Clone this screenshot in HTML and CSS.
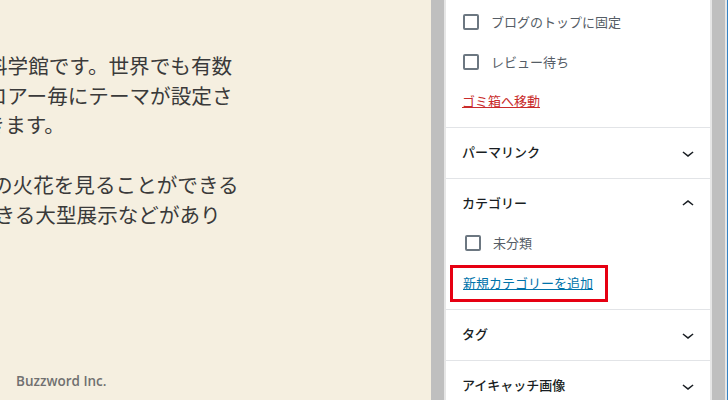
FILE: index.html
```html
<!DOCTYPE html>
<html lang="ja">

<head>
    <meta charset="UTF-8">
    <meta name="viewport" content="width=device-width, initial-scale=1.0">
    <title>投稿の編集</title>
    <link rel="stylesheet" href="styles.css">
</head>

<body>
    <div class="editor">
        <!-- 本文エリア -->
        <main class="content">
            <p class="para para-first">
                <span class="line shift-13">科学館です。世界でも有数</span>
                <span class="line shift-34">フロアー毎にテーマが設定さ</span>
                <span class="line shift-36">できます。</span>
            </p>
            <p class="para para-second">
                <span class="line shift-8">の火花を見ることができる</span>
                <span class="line shift-26">できる大型展示などがあり</span>
            </p>
            <footer class="site-footer">Buzzword Inc.</footer>
        </main>

        <div class="gutter"></div>

        <!-- 設定サイドバー -->
        <aside class="sidebar">
            <div class="panel panel-status">
                <label class="check-row">
                    <span class="checkbox"></span>
                    <span class="check-label">ブログのトップに固定</span>
                </label>
                <label class="check-row">
                    <span class="checkbox"></span>
                    <span class="check-label">レビュー待ち</span>
                </label>
                <div class="trash-row">
                    <a href="#" class="trash-link">ゴミ箱へ移動</a>
                </div>
            </div>

            <div class="panel">
                <div class="panel-head">
                    <span class="panel-title">パーマリンク</span>
                    <svg class="chevron" viewBox="0 0 24 24" width="24" height="24"><path d="M17.5 11.6L12 16l-5.5-4.4.9-1.2L12 14l4.6-3.6 1 1.2z"/></svg>
                </div>
            </div>

            <div class="panel">
                <div class="panel-head">
                    <span class="panel-title">カテゴリー</span>
                    <svg class="chevron" viewBox="0 0 24 24" width="24" height="24"><path d="M6.5 12.4L12 8l5.5 4.4-.9 1.2L12 10l-4.6 3.6-1-1.2z"/></svg>
                </div>
                <div class="panel-body">
                    <label class="check-row cat-row">
                        <span class="checkbox"></span>
                        <span class="check-label">未分類</span>
                    </label>
                    <div class="highlight">
                        <a href="#" class="add-link">新規カテゴリーを追加</a>
                    </div>
                </div>
            </div>

            <div class="panel">
                <div class="panel-head">
                    <span class="panel-title">タグ</span>
                    <svg class="chevron" viewBox="0 0 24 24" width="24" height="24"><path d="M17.5 11.6L12 16l-5.5-4.4.9-1.2L12 14l4.6-3.6 1 1.2z"/></svg>
                </div>
            </div>

            <div class="panel">
                <div class="panel-head">
                    <span class="panel-title">アイキャッチ画像</span>
                    <svg class="chevron" viewBox="0 0 24 24" width="24" height="24"><path d="M17.5 11.6L12 16l-5.5-4.4.9-1.2L12 14l4.6-3.6 1 1.2z"/></svg>
                </div>
            </div>
        </aside>

        <div class="scrollbar"></div>
    </div>
</body>

</html>
```

FILE: styles.css
```css
body {
    margin: 0;
    padding: 0;
    font-family: "Noto Sans CJK JP", "Noto Sans", sans-serif;
    background-color: #fff;
}

.editor {
    display: flex;
    height: 400px;
    overflow: hidden;
}

/* 本文エリア */
.content {
    width: 431px;
    flex-shrink: 0;
    display: flex;
    flex-direction: column;
    background-color: #f5efe0;
    overflow: hidden;
    color: #3a3a3a;
}

.para {
    margin: 0;
    font-size: 20.6px;
    line-height: 29.7px;
    white-space: nowrap;
}

.para-first {
    margin-top: 51px;
}

.para-second {
    margin-top: 29.7px;
}

/* 本文は左端で切れているので、行ごとに開始位置がずれる */
.line {
    display: block;
}

.shift-8 {
    margin-left: -8px;
}

.shift-13 {
    margin-left: -13px;
}

.shift-26 {
    margin-left: -26px;
}

.shift-34 {
    margin-left: -34px;
}

.shift-36 {
    margin-left: -36px;
}

.site-footer {
    margin-top: auto;
    padding: 0 0 9px 16px;
    font-family: "Open Sans", sans-serif;
    font-weight: 600;
    font-size: 13.5px;
    line-height: 20px;
    color: #707070;
}

/* スクロールバー風の帯 */
.gutter {
    width: 13px;
    flex-shrink: 0;
    background-color: #bfbfbf;
    border-right: 2px solid #e6e6e6;
}

.scrollbar {
    width: 13px;
    flex-shrink: 0;
    background-color: #bfbfbf;
    border-left: 2px solid #e6e6e6;
    border-right: 2px solid #e6e6e6;
}

.editor::after {
    content: "";
    width: 1px;
    flex-shrink: 0;
    background-color: #3582c4;
}

/* サイドバー */
.sidebar {
    width: 264px;
    flex-shrink: 0;
    background-color: #fff;
    font-size: 13px;
    color: #191e23;
}

.panel {
    border-bottom: 1px solid #e2e4e7;
}

.panel-status {
    padding: 2px 16px 5px;
}

.check-row {
    display: flex;
    align-items: center;
    gap: 12px;
    height: 40px;
    padding-left: 1px;
}

.checkbox {
    width: 16px;
    height: 16px;
    box-sizing: border-box;
    border: 2px solid #6c7781;
    border-radius: 2px;
    flex-shrink: 0;
}

.check-label {
    color: #555d66;
    line-height: 20px;
}

.trash-row {
    height: 40px;
    display: flex;
    align-items: center;
}

.trash-link {
    color: #c92c2c;
    line-height: 20px;
    padding-bottom: 2px;
}

.panel-head {
    display: flex;
    align-items: center;
    justify-content: space-between;
    height: 50px;
    padding: 0 10px 0 16px;
    font-weight: 500;
    color: #191e23;
}

.panel-title {
    padding-bottom: 4px;
}

.chevron {
    fill: #191e23;
}

.panel-body {
    padding: 0 16px 7px;
}

.cat-row {
    height: 24px;
    margin-top: 2px;
    padding-left: 3px;
}

.highlight {
    width: fit-content;
    margin: 10px 0 0 -12px;
    padding: 0 12px 0 10px;
    height: 31px;
    line-height: 30px;
    border: 3px solid #e60012;
}

.add-link {
    color: #0073aa;
}
```
